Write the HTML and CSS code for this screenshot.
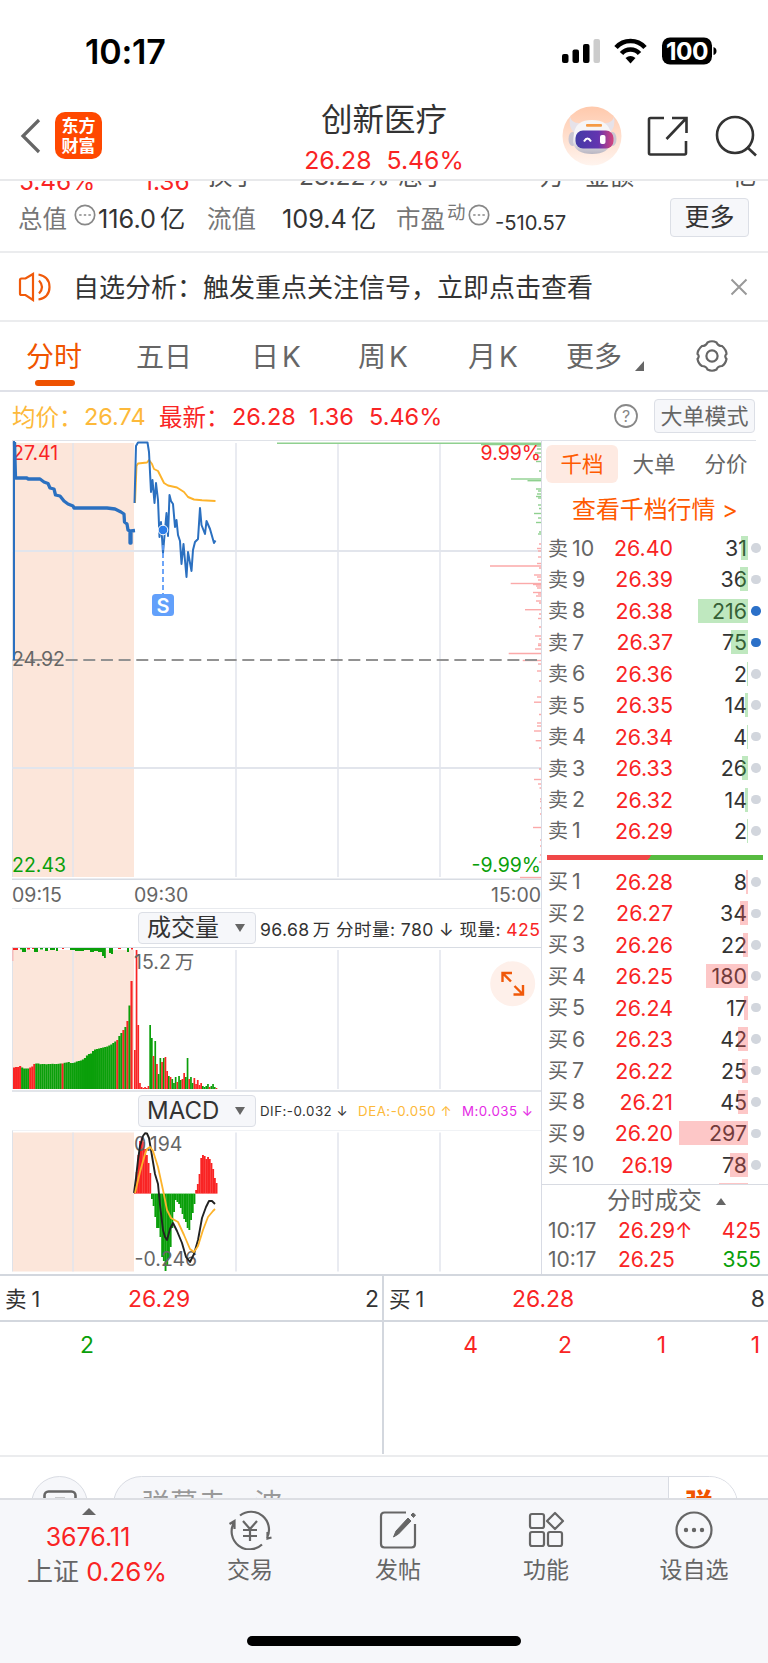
FILE: index.html
```html
<!DOCTYPE html>
<html lang="zh-CN">
<head>
  <meta charset="UTF-8">
  <meta name="viewport" content="width=device-width, initial-scale=1.0">
  <title>创新医疗</title>
  <link rel="stylesheet" href="styles.css">
</head>
<body>
  <div class="status-bar">
    <span class="clock">10:17</span>
    <svg class="status-icons" width="160" height="42" viewBox="0 0 160 42">
      <rect x="2" y="24" width="6.5" height="9" rx="2"/>
      <rect x="12.5" y="19.5" width="6.5" height="13.5" rx="2"/>
      <rect x="23" y="14" width="6.5" height="19" rx="2"/>
      <rect x="33.5" y="9" width="6.5" height="24" rx="2" fill="#ccc"/>
      <g fill="none" stroke="#000" stroke-width="4.6">
        <path d="M56 17.500a19.500 19.500 0 0 1 29 0"/>
        <path d="M61.500 23.500a12 12 0 0 1 18 0"/>
      </g>
      <path d="M65.500 28q5-4 10 0l-5 5.500z"/>
      <rect x="102" y="7.500" width="50" height="27" rx="8"/>
      <path d="M153.500 17v8q3-1 3-4t-3-4z"/>
      <text x="127" y="29.500" text-anchor="middle" class="battery">100</text>
    </svg>
  </div>

  <header>
    <svg class="back" width="24" height="40" viewBox="0 0 24 40"><path d="M20 4L4 20l16 16" fill="none" stroke="#666" stroke-width="3.200"/></svg>
    <div class="logo">东方<br>财富</div>
    <div class="title">
      <h1>创新医疗</h1>
      <p><span>26.28</span><span>5.46%</span></p>
    </div>
    <svg class="robot" width="60" height="60" viewBox="0 0 60 60">
      <defs>
        <linearGradient id="halo" x1="0" y1="0" x2="0" y2="1"><stop offset="0" stop-color="#ffc9ac"/><stop offset="1" stop-color="#fff4ee"/></linearGradient>
        <linearGradient id="visor" x1="0" y1="0" x2="1" y2="0"><stop offset="0" stop-color="#443ca6"/><stop offset=".6" stop-color="#6334b0"/><stop offset="1" stop-color="#d5447c"/></linearGradient>
        <linearGradient id="shell" x1="0" y1="0" x2="0" y2="1"><stop offset=".5" stop-color="#f6f5f7"/><stop offset="1" stop-color="#b9b6c2"/></linearGradient>
      </defs>
      <circle cx="30" cy="30" r="29.500" fill="url(#halo)"/>
      <path d="M8 11q2 6 9 6l-5 10q-6-7-4-16zM52 11q-2 6-9 6l5 10q6-7 4-16z" fill="#e6e2e9"/>
      <ellipse cx="10.500" cy="33" rx="4" ry="7" fill="#c9c6d2"/>
      <ellipse cx="50.500" cy="33" rx="4" ry="7" fill="#c9c6d2"/>
      <path d="M12 27q2-13 18-13t19 13v9q-2 12-19 12T11 36z" fill="url(#shell)"/>
      <rect x="13.500" y="24.500" width="38" height="18" rx="7.500" fill="url(#visor)"/>
      <path d="M22 35.500q3.500-6 7 0" fill="none" stroke="#fff" stroke-width="2"/>
      <rect x="38" y="29" width="5.500" height="9" rx="2" fill="#fff"/>
      <rect x="24" y="18" width="16" height="2.800" rx="1" fill="#f59a45"/>
    </svg>
    <svg class="share" width="42" height="42" viewBox="0 0 42 42" fill="none" stroke="#333" stroke-width="2.600">
      <path d="M17 3H3.500q-1.500 0-1.500 1.500V38q0 1.500 1.500 1.500h34q1.500 0 1.500-1.500V26M25 3h14.500v15M39 3.500L19.500 24"/>
    </svg>
    <svg class="search" width="44" height="44" viewBox="0 0 44 44" fill="none" stroke="#333" stroke-width="2.600">
      <circle cx="20" cy="21" r="18"/><path d="M32 33l9 8.500"/>
    </svg>
  </header>

  <div class="quote-cut">
    <span class="red">5.46%</span><span class="red">1.36</span><span>换手</span><span>28.22%</span><span>总手</span><span>万</span><span>金额</span><span>亿</span>
  </div>
  <div class="quote-row">
    <span class="label">总值</span>
    <svg class="dots" width="22" height="22" viewBox="0 0 22 22"><circle cx="11" cy="11" r="9.700"/><path d="M5.200 11h2.400m2.200 0h2.400m2.200 0h2.400"/></svg>
    <span>116.0<i>亿</i></span>
    <span class="label">流值</span>
    <span>109.4<i>亿</i></span>
    <span class="label">市盈</span>
    <span class="label small">动</span>
    <svg class="dots" width="22" height="22" viewBox="0 0 22 22"><circle cx="11" cy="11" r="9.700"/><path d="M5.200 11h2.400m2.200 0h2.400m2.200 0h2.400"/></svg>
    <span class="pe">-510.57</span>
    <button>更多</button>
  </div>

  <div class="notice">
    <svg width="34" height="30" viewBox="0 0 34 30" fill="none" stroke="#f05a0a" stroke-width="2.200">
      <path d="M2 8q0-1.500 1.500-1.500h4L15 2v26l-7.500-5h-4Q2 23 2 21.500zM21 8.500q6 6.500 0 13M20.500 2.500q11 2 11 12.500t-11 12.500"/>
    </svg>
    <p>自选分析：触发重点关注信号，立即点击查看</p>
    <svg width="18" height="18" viewBox="0 0 18 18" stroke="#999" stroke-width="2"><path d="M1.500 1.500l15 15M16.500 1.500l-15 15"/></svg>
  </div>

  <nav>
    <a class="active" href="#">分时</a>
    <a href="#">五日</a>
    <a class="k" href="#">日K</a>
    <a class="k" href="#">周K</a>
    <a class="k" href="#">月K</a>
    <a href="#">更多</a>
    <svg class="corner" width="9" height="10" viewBox="0 0 9 10"><path d="M9 0v10H0z" fill="#666"/></svg>
    <svg class="gear" width="34" height="34" viewBox="0 0 34 34" fill="none" stroke="#666" stroke-width="2.200">
      <path d="M12.500 3.500Q17 1 21.500 3.500q1.500 3.500 5.500 3.500 4.500 4 4.500 8-2.500 2 0 5-1 5-4.500 7-4 0-5.500 3.500-4.500 2.500-9 0Q11 27 7 27q-3.500-2-4.500-7 2.500-3 0-5 0-4 4.500-8 4 0 5.500-3.500z"/>
      <circle cx="17" cy="17" r="5.600"/>
    </svg>
  </nav>

  <div class="price-line">
    <span class="avg">均价：</span><span class="avg">26.74</span>
    <span>最新：</span><span>26.28</span><span>1.36</span><span>5.46%</span>
    <svg width="26" height="26" viewBox="0 0 26 26"><circle cx="13" cy="13" r="11" fill="none" stroke="#888" stroke-width="1.800"/><text x="13" y="18.800" text-anchor="middle">?</text></svg>
    <button>大单模式</button>
  </div>

  <main>
    <section class="charts">
      <svg class="chart" id="priceChart" width="542" height="440" viewBox="0 440 542 440"></svg>
      <div class="time-axis"><span>09:15</span><span>09:30</span><span>15:00</span></div>
      <div class="indicator">
        <button>成交量<i></i></button>
        <p>96.68<i>万</i> 分时量: 780 ↓ 现量: <b>425</b></p>
      </div>
      <svg class="chart" id="volumeChart" width="542" height="145" viewBox="0 947 542 145"></svg>
      <div class="indicator macd">
        <button>MACD<i></i></button>
        <p><span>DIF:-0.032 ↓</span><span class="dea">DEA:-0.050 ↑</span><span class="m">M:0.035 ↓</span></p>
      </div>
      <svg class="chart" id="macdChart" width="542" height="144" viewBox="0 1130 542 144"></svg>
    </section>

    <aside>
      <div class="book-tabs"><a class="active" href="#">千档</a><a href="#">大单</a><a href="#">分价</a></div>
      <a class="book-link" href="#">查看千档行情 &gt;</a>
      <div id="asks"></div>
      <div class="ratio"></div>
      <div id="bids"></div>
      <div class="book-cut"></div>
      <div class="trades">
        <h2>分时成交<i></i></h2>
        <div class="trade"><span>10:17</span><span class="red">26.29↑</span><span class="red">425</span></div>
        <div class="trade"><span>10:17</span><span class="red">26.25</span><span class="green">355</span></div>
      </div>
    </aside>
  </main>

  <div class="queue">
    <div class="side">
      <div class="best"><span>卖<em>1</em></span><span class="red">26.29</span><span>2</span></div>
      <div class="orders green"><span>2</span><span></span><span></span><span></span></div>
    </div>
    <div class="side">
      <div class="best"><span>买<em>1</em></span><span class="red">26.28</span><span>8</span></div>
      <div class="orders red"><span>4</span><span>2</span><span>1</span><span>1</span></div>
    </div>
  </div>

  <div class="comment">
    <div class="round"><svg width="34" height="28" viewBox="0 0 34 28" fill="none" stroke="#666" stroke-width="2.600"><rect x="1.500" y="1.500" width="31" height="24" rx="4"/><path d="M12 9h10"/></svg></div>
    <div class="field"><span>弹幕走一波</span><b>弹</b></div>
  </div>

  <footer>
    <div class="index">
      <i></i>
      <p class="red">3676.11</p>
      <p>上证 <span class="red">0.26%</span></p>
    </div>
    <a href="#">
      <svg width="44" height="40" viewBox="0 0 44 40" fill="none" stroke="#666" stroke-width="2.200">
        <path d="M12 5.500A18 18 0 0 1 39 28M39.500 22v6.500l4-1M34 34.500A18 18 0 0 1 6 12.500v-1M1.500 14l5-3v8M15 11l7 8 7-8M22 19v12M15 20h14M15 26h14"/>
      </svg>交易
    </a>
    <a href="#">
      <svg width="44" height="40" viewBox="0 0 44 40" fill="none" stroke="#666" stroke-width="2.200">
        <path d="M30 2.500H8.500Q5 2.500 5 6v28q0 3.500 3.500 3.500h27q3.500 0 3.500-3.500V14"/><path d="M32 8L20 21l-2.500 6 5-3L35 11zM35 5l2-2 2.500 2-2 2.500z" fill="#666" stroke-width="1"/>
      </svg>发帖
    </a>
    <a href="#">
      <svg width="44" height="40" viewBox="0 0 44 40" fill="none" stroke="#666" stroke-width="2.200">
        <rect x="6" y="4" width="14" height="14" rx="2"/><rect x="6" y="22" width="14" height="14" rx="2"/><rect x="24" y="22" width="14" height="14" rx="2"/><path d="M31 3l8 8-8 8-8-8z" stroke-linejoin="round"/>
      </svg>功能
    </a>
    <a href="#">
      <svg width="44" height="40" viewBox="0 0 44 40" fill="none" stroke="#666" stroke-width="2.200">
        <circle cx="22" cy="20" r="17.500"/><path d="M14 20h0M22 20h0M30 20h0" stroke-width="4.400" stroke-linecap="round"/>
      </svg>设自选
    </a>
    <div class="home"></div>
  </footer>

  <script>
    const RED = "#f92424", GREEN = "#0a9f0a", BLUE = "#2b70c0", YELLOW = "#fdb32b";

    const line = (x1, y1, x2, y2, color, w = 1.5, extra = "") =>
      `<line x1="${x1}" y1="${y1}" x2="${x2}" y2="${y2}" stroke="${color}" stroke-width="${w}" ${extra}/>`;
    const rect = (x, y, w, h, color) =>
      `<rect x="${x}" y="${y}" width="${w}" height="${h}" fill="${color}"/>`;
    const poly = (points, color, w) =>
      `<polyline points="${points}" fill="none" stroke="${color}" stroke-width="${w}" stroke-linejoin="round"/>`;
    const label = (x, y, text, color, anchor = "start") =>
      `<text x="${x}" y="${y}" fill="${color}" text-anchor="${anchor}">${text}</text>`;

    // call auction background and the vertical time lines
    function frame(top, bottom) {
      let s = rect(12.5, top, 121.5, bottom - top, "#fce6da");
      s += line(12.5, top - 2, 12.5, bottom, "#dfe2e8", 1);
      [73, 236, 338, 440].forEach(x => { s += line(x, top, x, bottom, "#e2e5ec"); });
      return s;
    }

    function drawPrice() {
      let s = frame(443, 877);
      s += line(12, 551, 541, 551, "#e2e5ec", 2) + line(12, 768, 541, 768, "#e2e5ec", 2);
      s += line(12, 879.3, 541, 879.3, "#d8dce3", 1.5);
      // price distribution on the right edge: [y, start x]
      const up = [[443.3,277],[444.5,481],[446,535],[449,537],[453,535],[457,538],[461.5,536],[471,539],[479,511],[480.7,527.5],[489,536],[491,538],[494,537],[496.5,536],[498,538],[505,538],[508.5,539],[513.5,534],[518,538],[522.5,536],[532,539],[534,538]];
      const down = [[544,539],[548.5,537],[551,538],[557,538],[563.5,537],[566,490],[568,539],[575,534],[577,537],[580,538],[583.5,510.7],[584.5,533],[586,536],[588,537],[592.5,533],[594,538],[596,536],[601,536],[603,539],[609.7,525],[614,539],[618.5,538],[627,539],[636,535],[639,539],[644,538],[645.5,538],[649,535],[653.5,508.7],[660.5,522.7],[664,538],[671,537],[681,539],[697,537],[702.2,534],[714.5,539],[723,537],[726,537],[731,534],[740.7,535.7],[748,539],[769,539],[779.5,534],[784,538],[788,539.5],[799,540],[801.5,540],[808,540],[814,540],[827.5,533],[840,540],[846,540],[855,540],[862,539],[877.5,520]];
      up.forEach(([y, x]) => { s += line(x, y, 541, y, "#8fd08f", 1.4); });
      down.forEach(([y, x]) => { s += line(x, y, 541, y, "#fba9a9", 1.4); });
      s += line(12.6, 660, 541, 660, "#929292", 2, 'stroke-dasharray="12 5.67"');
      s += label(12, 460, "27.41", RED) + label(12, 666, "24.92", "#666") + label(12, 872, "22.43", GREEN);
      s += label(541, 460, "9.99%", RED, "end") + label(541, 872, "-9.99%", GREEN, "end");
      s += line(14, 441, 14, 660, BLUE, 2);
      s += poly("14.5,442 15.5,478 27,478 28,479 40,479 44,482 48,483.5 50,488 54,489 55.5,495 60,496 64,501 68,504 73,506 74,508 107,508 115,509 121,512 124,514 124.5,522 127,524 128,530 130,531 130,543 131,543 131,531 135,530.5", BLUE, 3.3);
      s += poly("135,503 136.5,466 138,463.5 147,462.5 149,460 152,464 154,469 158,471 161,477 164,483 168,485.5 177,487.5 184,492 188,497 194,499.5 202,500.3 215.5,501", YELLOW, 1.9);
      s += poly("134.5,503 136,446 138,442.5 147.5,442.5 149,452 151,492 152.5,480 154.5,503 156,483 158,500 159.5,537 161,522 163,553 165,530 166.5,513 168,536 169.5,495 171,501 173,504 175,527 176.5,520 178,535 180,541 181.5,564 183.5,544 186.5,577 188,552 191.5,571 193,550 195,542 198,539 200,508 201.5,525 205,534 206.5,521 210,529 214,543 215.5,540.5", BLUE, 2);
      s += line(163, 545, 163, 594, "#5e9cf8", 1.8, 'stroke-dasharray="5 3"');
      s += `<circle cx="163" cy="530" r="4.800" fill="#2b7de9" stroke="#fff"/>`;
      s += `<rect x="152" y="594" width="22" height="22" rx="3.500" fill="#62a0fb"/><text class="flag" x="163" y="612.500" text-anchor="middle">S</text>`;
      document.getElementById("priceChart").innerHTML = s;
    }

    function drawVolume() {
      let s = frame(950, 1089);
      s += line(12, 947.3, 541, 947.3, "#d8dce3") + line(12, 1091, 541, 1091, "#d8dce3");
      // auction volume
      const tops = [1067.5,1067,1067,1066,1067.5,1068.5,1068.5,1068.5,1067.5,1066.5,1064,1063.5,1063.5,1064.2,1064,1064,1064.3,1064,1064,1063.8,1064,1064,1063.8,1063.5,1063.5,1062.8,1062.5,1062,1063,1063,1062.5,1061.5,1061,1060.5,1059.5,1058,1055.5,1054,1053.5,1051,1049.5,1049,1048.5,1048,1047.5,1047,1046.5,1045.5,1044.5,1043,1041.5,1040,1036,1033,1030,1027,1021,1005.5,981];
      const span = 119.5 / tops.length;
      tops.forEach((y, i) => {
        const red = i < 4 || (i >= 8 && i < 11) || [24, 51, 54, 56, 58].includes(i);
        s += rect((13 + i * span).toFixed(2), y, span + .1, 1089 - y, red ? RED : GREEN);
      });
      // unmatched orders hanging from the top
      [[12.5,13,"#f99",.8],[13,2,RED,5],[20,1.5,GREEN,2],[22,4,GREEN,4],[27,1.5,RED,3],[32,1,RED,2],[34,4,GREEN,4],[40,1.5,GREEN,3],[45,3,GREEN,3],[50,2,GREEN,5],[56,3,GREEN,2],[62,1,RED,2],[70,2,GREEN,5],[75,3,GREEN,9],[84,2,GREEN,6],[90,4,GREEN,4],[94,3,GREEN,4],[98,4,GREEN,4],[102,8,GREEN,2],[104,10,GREEN,1.8],[109,5,GREEN,2],[111,6,GREEN,2],[118,1,RED,3],[127,4,GREEN,2],[131,1.5,RED,2]]
        .forEach(([x, h, c, w]) => { s += rect(x, 948, w, h, c); });
      // minute bars since the open
      const bars = "r1050 r950 r1025 r1083 r1087 r1088 r1087 r1088 r1086 g1025 g1038 r1056 g1041 r1064 g1074 g1058 r1062 g1058 r1057 r1071 g1076 r1077 g1079 g1083 g1077 r1082 g1076 g1080 r1079 r1073 g1077 g1058 r1079 g1077 g1083 r1078 r1084 r1080 r1085 r1083 g1086 g1087 g1086 g1084 r1087 g1086 g1084 g1087 r1088".split(" ");
      bars.forEach((b, i) => {
        const y = +b.slice(1);
        s += rect((134 + i * 1.7).toFixed(2), y, 1.7, 1089 - y, b[0] === "r" ? RED : GREEN);
      });
      s += label(134, 969, "15.2<tspan dx='4'>万</tspan>", "#666");
      s += `<circle cx="512.700" cy="983.700" r="22.500" fill="#fef0ea"/>
        <path d="M502.500 982v-9h9.500M502.500 973l8.500 8.500M523 985v9.500h-9.500M523 994.500l-8.500-8.500" fill="none" stroke="#f0590a" stroke-width="2.400"/>`;
      document.getElementById("volumeChart").innerHTML = s;
    }

    function drawMacd() {
      let s = frame(1132.5, 1271.5);
      s += line(12, 1129.8, 541, 1129.8, "#e2e5ec");
      const ends = [1185,1172,1155,1141,1137,1142,1149,1155,1163,1173,1199,1206,1217,1228,1228,1237,1257,1261,1271,1265,1258,1247,1228,1212,1200,1202,1204,1208,1214,1219,1222,1228,1230,1220,1213,1204,1190,1184,1174,1158,1155,1156,1159,1157,1159,1163,1169,1178,1183];
      ends.forEach((y, i) => {
        s += rect((134 + i * 1.7).toFixed(2), Math.min(y, 1193.6), 1.9, Math.abs(y - 1193.6), y < 1193.6 ? RED : GREEN);
      });
      s += label(134, 1151, "0.194", "#666") + label(134.5, 1265.5, "-0.246", "#666");
      s += poly("134,1193 136,1178 138,1160 140,1146 143,1136 145,1133.3 147,1133.5 149,1138 151,1150 153,1162 155,1174 158,1184 160,1205 163,1230 165,1237 167,1240 170,1229 173,1223 177,1231 182,1243 186,1257 190,1262 194,1254 198,1240 202,1218 206,1207 209,1201 212,1201 215,1204", "#222", 1.9);
      s += poly("135,1193 140,1172 145,1154 147,1149 150,1147 153,1151 158,1167 163,1190 167,1210 171,1218 178,1222 184,1235 190,1249 194,1252 198,1246 203,1230 208,1217 213,1211 215,1209", YELLOW, 1.8);
      document.getElementById("macdChart").innerHTML = s;
    }

    const asks = [[10,"26.40",31],[9,"26.39",36],[8,"26.38",216],[7,"26.37",75],[6,"26.36",2],[5,"26.35",14],[4,"26.34",4],[3,"26.33",26],[2,"26.32",14],[1,"26.29",2]];
    const bids = [[1,"26.28",8],[2,"26.27",34],[3,"26.26",22],[4,"26.25",180],[5,"26.24",17],[6,"26.23",42],[7,"26.22",25],[8,"26.21",45],[9,"26.20",297],[10,"26.19",78]];

    function renderBook(id, name, rows) {
      document.getElementById(id).innerHTML = rows.map(([n, price, qty]) => `
        <div class="level">
          <span>${name}<em>${n}</em></span>
          <span class="red">${price}</span>
          <span class="qty">${qty}<i style="width: ${Math.max(.6, qty * .232)}px"></i></span>
          <u class="${id === "asks" && (n === 8 || n === 7) ? "big" : ""}"></u>
        </div>
      `).join("");
    }

    drawPrice();
    drawVolume();
    drawMacd();
    renderBook("asks", "卖", asks);
    renderBook("bids", "买", bids);
  </script>
</body>
</html>
```
FILE: styles.css
```css
* {
  box-sizing: border-box;
}
body {
  margin: 0;
  width: 768px;
  height: 1663px;
  overflow: hidden;
  font-family: Inter, "Noto Sans CJK SC", sans-serif;
  background-color: #fff;
  color: #333;
}
h1, h2, p {
  margin: 0;
  font-weight: 400;
}
a {
  color: #666;
  text-decoration: none;
}
i, em, u {
  font-style: normal;
  text-decoration: none;
}
svg {
  display: block;
  flex-shrink: 0;
}
span {
  white-space: nowrap;
}
button {
  font-family: inherit;
  color: #333;
  background-color: #f6f7fa;
  border: 1.5px solid #dcdfe6;
  border-radius: 4px;
  padding: 0;
  white-space: nowrap;
}
.red { color: #f92424; }
.green { color: #0a9f0a; }

.status-bar {
  height: 90px;
  display: flex;
  justify-content: space-between;
  padding: 30px 48px 0 85px;
}
.clock {
  font-size: 34px;
  font-weight: 600;
  line-height: 43px;
  letter-spacing: -0.2px;
  color: #000;
}
.battery {
  font-size: 24.5px;
  font-weight: 700;
  letter-spacing: -0.5px;
  fill: #fff;
}

header {
  height: 91px;
  display: flex;
  border-bottom: 2px solid #e8e9eb;
}
.back { margin: 26px 0 0 19px; }
.logo {
  width: 47px;
  height: 47px;
  margin: 22px 0 0 12px;
  padding-top: 4px;
  border-radius: 10px;
  background-color: #ff4800;
  color: #fff;
  font-size: 17px;
  font-weight: 700;
  line-height: 20px;
  text-align: center;
}
.title {
  width: 200px;
  margin-left: 182px;
  text-align: center;
}
.title h1 {
  font-size: 31.5px;
  line-height: 40px;
  margin-top: 10px;
}
.title p {
  display: flex;
  justify-content: center;
  gap: 15px;
  font-size: 24.8px;
  line-height: 30px;
  margin-top: 5px;
  color: #f92424;
}
.robot { margin: 16px 0 0 78px; }
.share { margin: 25px 0 0 25px; }
.search { margin: 24px 0 0 26px; }

.quote-cut {
  height: 9px;
  overflow: hidden;
  display: grid;
  grid-template-columns: 124px 65px 91px 99px 142px 45px 147px 30px;
  padding-left: 19px;
  font-size: 24.5px;
  line-height: 30px;
  align-items: end;
  color: #555;
}
.quote-cut span {
  margin-top: -40px;
  margin-bottom: -1px;
}
.quote-cut .red { margin-bottom: -6px; }
.quote-row {
  height: 63px;
  display: grid;
  grid-template-columns: 56px 24px 109px 75px 114px 51px 21px 27px 175px 79px;
  padding: 8px 0 0 18px;
  border-bottom: 2px solid #ebecee;
  font-size: 25.3px;
  line-height: 42px;
}
.quote-row i { margin-left: 4px; }
.quote-row .label {
  font-size: 24.5px;
  color: #777;
}
.quote-row .label.small {
  font-size: 18.5px;
  line-height: 28px;
}
.quote-row .pe {
  font-size: 20.2px;
  line-height: 50px;
}
.quote-row button {
  height: 39px;
  font-size: 25px;
  line-height: 35px;
}
.dots {
  margin-top: 6px;
  fill: none;
  stroke: #888;
  stroke-width: 1.7;
}

.notice {
  height: 69px;
  display: flex;
  align-items: center;
  padding: 0 20px 0 18px;
  border-bottom: 2px solid #ebecee;
}
.notice p {
  flex: 1;
  margin: 2px 0 0 21px;
  font-size: 26px;
  line-height: 36px;
}

nav {
  height: 70px;
  display: grid;
  grid-template-columns: 110px 115px 107px 110px 98px 69px 60px 40px;
  padding-left: 26px;
  border-bottom: 2px solid #dfe1e8;
}
nav a {
  height: 65px;
  font-size: 28px;
  line-height: 70px;
}
nav a.k { letter-spacing: 3px; }
nav a.active {
  color: #f05400;
}
nav a.active::after {
  content: "";
  display: block;
  width: 40px;
  height: 6px;
  margin: -12.5px 0 0 9px;
  border-radius: 3px;
  background-color: #ee5200;
}
.corner { margin-top: 39px; }
.gear { margin-top: 17px; }

.price-line {
  height: 48px;
  display: grid;
  grid-template-columns: 72px 75px 73px 77px 60px 244px 41px 101px;
  padding-left: 12px;
  align-items: center;
  font-size: 23.5px;
  color: #f92424;
}
.price-line .avg { color: #fdb93a; }
.price-line text {
  font-size: 16px;
  fill: #888;
}
.price-line button {
  height: 34px;
  font-size: 22px;
  line-height: 30px;
  color: #666;
}

main {
  height: 836px;
  display: flex;
  position: relative;
  border-bottom: 2px solid #d3d7de;
}
main::before {
  content: "";
  position: absolute;
  left: 12px;
  right: 12px;
  top: 0;
  height: 1px;
  background-color: #dfe2e8;
}
.charts {
  width: 542px;
  border-right: 1px solid #d8dbe4;
}
.chart {
  font-size: 19.5px;
}
.chart .flag {
  font-size: 20px;
  font-weight: 600;
  fill: #fff;
}
.time-axis {
  height: 29px;
  display: grid;
  grid-template-columns: 122px 1fr auto;
  margin-left: 12px;
  font-size: 19.5px;
  line-height: 31px;
  color: #666;
  border-bottom: 1px solid #e8eaee;
}
.indicator {
  height: 38px;
  display: flex;
  align-items: center;
  padding-left: 138px;
}
.indicator button {
  width: 118px;
  height: 32px;
  display: flex;
  align-items: center;
  justify-content: space-between;
  padding: 0 10px 0 8px;
  font-size: 24px;
  line-height: 30px;
}
.indicator button i {
  border: 5px solid transparent;
  border-top: 8px solid #666;
  border-bottom: 0;
}
.indicator p {
  margin-left: 4px;
  font-size: 17.6px;
  letter-spacing: 0.4px;
  white-space: nowrap;
}
.indicator p i { margin-left: 3px; }
.indicator b {
  font-weight: 400;
  color: #f92424;
}
.indicator.macd p {
  display: flex;
  gap: 10px;
  font-size: 13.3px;
  letter-spacing: 0.5px;
}
.dea { color: #fdb93a; }
.m { color: #e52be5; }

aside {
  width: 226px;
  height: 834px;
  display: flex;
  flex-direction: column;
  overflow: hidden;
}
.book-tabs {
  display: flex;
  padding: 5px 0 0 4px;
  font-size: 21.5px;
  line-height: 38px;
}
.book-tabs a {
  width: 72px;
  text-align: center;
}
.book-tabs a.active {
  border-radius: 6px;
  background-color: #feeae2;
  color: #ff5a00;
}
.book-link {
  height: 48.5px;
  padding: 2px 0 0 30px;
  font-size: 23.9px;
  line-height: 50px;
  color: #ff5a00;
  white-space: nowrap;
}
.level {
  height: 31.45px;
  display: grid;
  grid-template-columns: 59px 66px 74px 4px 10px;
  padding-left: 6px;
  align-items: center;
  font-size: 21.4px;
  line-height: 32px;
}
.level span:first-child {
  font-size: 20px;
  color: #666;
}
.level em { margin-left: 4px; font-size: 21.4px; }
.level .red { text-align: right; }
.level .qty {
  position: relative;
  text-align: right;
}
.level .qty i {
  position: absolute;
  right: -1px;
  top: 4px;
  height: 24px;
  background-color: rgba(60, 184, 60, 0.33);
}
#bids .qty i { background-color: rgba(250, 80, 80, 0.32); }
.level u {
  grid-column: 5;
  width: 9.5px;
  height: 9.5px;
  border-radius: 50%;
  background-color: #d2d6dd;
}
.level u.big { background-color: #2b70c8; }
.ratio {
  height: 5.5px;
  margin: 9.5px 0 5.5px 5px;
  width: 216px;
  background: linear-gradient(120deg, #f04848 47.5%, #57bb40 47.5%);
}
.book-cut {
  width: 29px;
  height: 1.5px;
  margin: 3px 0 0 177px;
  background-color: #fdc5c5;
}
.trades {
  border-top: 1.5px solid #d8dbe2;
  color: #666;
}
.trades h2 {
  display: flex;
  align-items: center;
  gap: 14px;
  padding-left: 65px;
  font-size: 23.7px;
  line-height: 32px;
}
.trades h2 i {
  border: 5px solid transparent;
  border-bottom: 7px solid #666;
  border-top: 0;
}
.trade {
  display: grid;
  grid-template-columns: 70px 80px 63px;
  padding-left: 6px;
  font-size: 21px;
  line-height: 28.5px;
}
.trade span:last-child { text-align: right; }

.queue {
  height: 181px;
  display: flex;
  border-bottom: 2px solid #ebecee;
}
.side {
  width: 384px;
  height: 178px;
}
.side:first-child { border-right: 2px solid #d3d7de; }
.best {
  height: 45.5px;
  display: grid;
  grid-template-columns: 123px 100px 1fr;
  padding: 0 3px 0 5px;
  border-bottom: 2px solid #d3d7de;
  font-size: 22.9px;
  line-height: 47px;
}
.best em { margin-left: 5px; }
.best span:first-child { font-size: 21.5px; }
.best span:last-child { text-align: right; }
.orders {
  display: grid;
  grid-template-columns: repeat(4, 94px);
  font-size: 22.9px;
  line-height: 47px;
  text-align: right;
}

.comment {
  height: 41px;
  display: flex;
  padding: 19px 30px 0 31px;
  overflow: hidden;
}
.round {
  width: 57px;
  height: 57px;
  padding: 13px 0 0 11px;
  border: 1.5px solid #d9dce3;
  border-radius: 50%;
  background-color: #f6f7fa;
}
.field {
  width: 625px;
  height: 57px;
  display: flex;
  margin-left: 25px;
  overflow: hidden;
  border: 1.5px solid #d9dce3;
  border-radius: 29px;
  background-color: #f6f7fa;
  color: #999;
  font-size: 28px;
  line-height: 54px;
}
.field span {
  width: 554px;
  padding-left: 28px;
}
.field b {
  flex: 1;
  padding-left: 16px;
  border-left: 1.5px solid #d9dce3;
  background-color: #fff;
  color: #f05400;
  font-weight: 900;
}

footer {
  position: relative;
  height: 166px;
  display: grid;
  grid-template-columns: 176px repeat(4, 148px);
  border-top: 2px solid #dcdee3;
  background-color: #f6f7fa;
}
footer a {
  display: flex;
  flex-direction: column;
  align-items: center;
  padding-top: 10px;
  font-size: 23px;
  line-height: 41px;
}
.index {
  display: flex;
  flex-direction: column;
  align-items: center;
  padding-top: 8px;
  font-size: 25px;
  line-height: 34px;
  color: #666;
  white-space: nowrap;
}
.index i {
  margin: 0 0 5px 2px;
  border: 7px solid transparent;
  border-bottom: 7px solid #666;
  border-top: 0;
}
.index p:last-child {
  margin: 0 0 0 18px;
  font-size: 26px;
  line-height: 35px;
}
.home {
  position: absolute;
  left: 247px;
  top: 136px;
  width: 274px;
  height: 10px;
  border-radius: 5px;
  background-color: #000;
}
```
